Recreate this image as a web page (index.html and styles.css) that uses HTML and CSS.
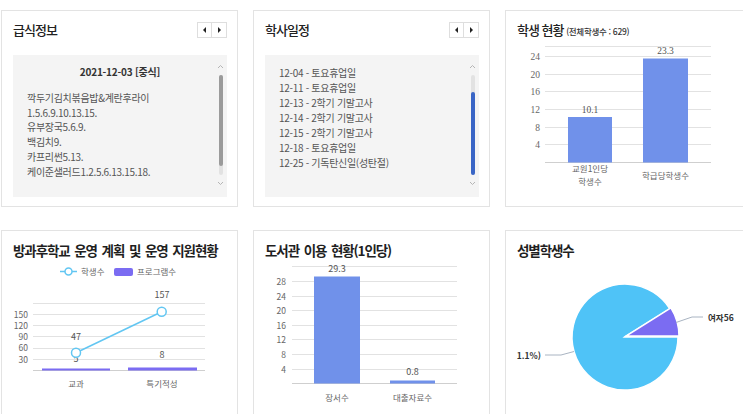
FILE: index.html
```html
<!DOCTYPE html>
<html lang="ko">
<head>
<meta charset="utf-8">
<title>대시보드</title>
<link rel="stylesheet" href="styles.css">
</head>
<body>
<div class="dash">

  <section class="panel">
    <div class="panel-head">
      <h2 class="title">급식정보</h2>
      <div class="pager"><span class="pg prev"></span><span class="pg next"></span></div>
    </div>
    <div class="scrollbox">
      <div class="meal-date">2021-12-03 [중식]</div>
      <ul class="lines meal">
        <li>깍두기김치볶음밥&amp;계란후라이</li>
        <li>1.5.6.9.10.13.15.</li>
        <li>유부장국5.6.9.</li>
        <li>백김치9.</li>
        <li>카프리썬5.13.</li>
        <li>케이준샐러드1.2.5.6.13.15.18.</li>
      </ul>
      <div class="sbar">
        <svg class="chev" width="7" height="5" viewBox="0 0 7 5"><polyline points="1,4 3.5,1.5 6,4" fill="none" stroke="#b5b5b5" stroke-width="1"/></svg>
        <div class="track"><div class="thumb thumb-gray"></div></div>
        <svg class="chev" width="7" height="5" viewBox="0 0 7 5"><polyline points="1,1 3.5,3.5 6,1" fill="none" stroke="#b5b5b5" stroke-width="1"/></svg>
      </div>
    </div>
  </section>

  <section class="panel">
    <div class="panel-head">
      <h2 class="title">학사일정</h2>
      <div class="pager"><span class="pg prev"></span><span class="pg next"></span></div>
    </div>
    <div class="scrollbox">
      <ul class="lines sched">
        <li>12-04 - 토요휴업일</li>
        <li>12-11 - 토요휴업일</li>
        <li>12-13 - 2학기 기말고사</li>
        <li>12-14 - 2학기 기말고사</li>
        <li>12-15 - 2학기 기말고사</li>
        <li>12-18 - 토요휴업일</li>
        <li>12-25 - 기독탄신일(성탄절)</li>
      </ul>
      <div class="sbar">
        <svg class="chev" width="7" height="5" viewBox="0 0 7 5"><polyline points="1,4 3.5,1.5 6,4" fill="none" stroke="#b5b5b5" stroke-width="1"/></svg>
        <div class="track"><div class="thumb thumb-blue"></div></div>
        <svg class="chev" width="7" height="5" viewBox="0 0 7 5"><polyline points="1,1 3.5,3.5 6,1" fill="none" stroke="#b5b5b5" stroke-width="1"/></svg>
      </div>
    </div>
  </section>

  <section class="panel">
    <div class="panel-head">
      <h2 class="title">학생 현황 <small class="sub">(전체학생수 : 629)</small></h2>
    </div>
    <svg class="chart" width="217" height="159" viewBox="517 38 217 159">
      <g stroke="#e2e2e2" stroke-width="1">
        <line x1="545" y1="46.5" x2="711" y2="46.5"/>
        <line x1="545" y1="56.5" x2="711" y2="56.5"/>
        <line x1="545" y1="74.5" x2="711" y2="74.5"/>
        <line x1="545" y1="91.5" x2="711" y2="91.5"/>
        <line x1="545" y1="109.5" x2="711" y2="109.5"/>
        <line x1="545" y1="127.5" x2="711" y2="127.5"/>
        <line x1="545" y1="144.5" x2="711" y2="144.5"/>
      </g>
      <line x1="545" y1="162.5" x2="711" y2="162.5" stroke="#cfcfcf"/>
      <g class="ax serif" text-anchor="end">
        <text x="540" y="59.5">24</text>
        <text x="540" y="77.5">20</text>
        <text x="540" y="94.5">16</text>
        <text x="540" y="112.5">12</text>
        <text x="540" y="130.5">8</text>
        <text x="540" y="147.5">4</text>
      </g>
      <rect x="568" y="117" width="44" height="45.5" fill="#7091ea"/>
      <rect x="643" y="58.5" width="45" height="104" fill="#7091ea"/>
      <g class="val serif" text-anchor="middle">
        <text x="590" y="113">10.1</text>
        <text x="665.5" y="54">23.3</text>
      </g>
      <g class="ax" text-anchor="middle">
        <text x="590" y="172">교원1인당</text>
        <text x="590" y="185">학생수</text>
        <text x="665.5" y="179">학급당학생수</text>
      </g>
    </svg>
  </section>

  <section class="panel">
    <div class="panel-head">
      <h2 class="title title-lg">방과후학교 운영 계획 및 운영 지원현황</h2>
    </div>
    <svg class="chart" width="214" height="155" viewBox="13 258 214 155">
      <line x1="60" y1="271.5" x2="77" y2="271.5" stroke="#62c6f2" stroke-width="1.5"/>
      <circle cx="68.5" cy="271.5" r="3.5" fill="#fff" stroke="#62c6f2" stroke-width="1.5"/>
      <text class="leg" x="81" y="274.5">학생수</text>
      <rect x="114" y="268" width="19" height="8" rx="2" fill="#7b6cf2"/>
      <text class="leg" x="137" y="274.5">프로그램수</text>
      <g stroke="#e2e2e2" stroke-width="1">
        <line x1="33" y1="303.5" x2="205" y2="303.5"/>
        <line x1="33" y1="314.5" x2="205" y2="314.5"/>
        <line x1="33" y1="325.5" x2="205" y2="325.5"/>
        <line x1="33" y1="336.5" x2="205" y2="336.5"/>
        <line x1="33" y1="348.5" x2="205" y2="348.5"/>
        <line x1="33" y1="359.5" x2="205" y2="359.5"/>
      </g>
      <line x1="33" y1="370.5" x2="205" y2="370.5" stroke="#cfcfcf"/>
      <g class="ax" text-anchor="end">
        <text x="28" y="317.5">150</text>
        <text x="28" y="328.5">120</text>
        <text x="28" y="339.5">90</text>
        <text x="28" y="351">60</text>
        <text x="28" y="362.5">30</text>
      </g>
      <rect x="42" y="368.5" width="68" height="2" fill="#7b6cf2"/>
      <rect x="128" y="367.5" width="69" height="3" fill="#7b6cf2"/>
      <g class="val" text-anchor="middle">
        <text x="76" y="340">47</text>
        <text x="162" y="297.5">157</text>
        <text x="76" y="361.5">5</text>
        <text x="162" y="358">8</text>
      </g>
      <line x1="76" y1="352.7" x2="161.7" y2="311.7" stroke="#62c6f2" stroke-width="1.5"/>
      <circle cx="76" cy="352.7" r="4.5" fill="#fff" stroke="#62c6f2" stroke-width="1.5"/>
      <circle cx="161.7" cy="311.7" r="4.5" fill="#fff" stroke="#62c6f2" stroke-width="1.5"/>
      <g class="ax" text-anchor="middle">
        <text x="76" y="387">교과</text>
        <text x="162" y="387">특기적성</text>
      </g>
    </svg>
  </section>

  <section class="panel">
    <div class="panel-head">
      <h2 class="title title-lg">도서관 이용 현황(1인당)</h2>
    </div>
    <svg class="chart" width="214" height="155" viewBox="265 258 214 155">
      <g stroke="#e2e2e2" stroke-width="1">
        <line x1="292" y1="266.5" x2="457" y2="266.5"/>
        <line x1="292" y1="281.5" x2="457" y2="281.5"/>
        <line x1="292" y1="296.5" x2="457" y2="296.5"/>
        <line x1="292" y1="310.5" x2="457" y2="310.5"/>
        <line x1="292" y1="325.5" x2="457" y2="325.5"/>
        <line x1="292" y1="339.5" x2="457" y2="339.5"/>
        <line x1="292" y1="354.5" x2="457" y2="354.5"/>
        <line x1="292" y1="369.5" x2="457" y2="369.5"/>
      </g>
      <line x1="292" y1="383.5" x2="457" y2="383.5" stroke="#cfcfcf"/>
      <g class="ax" text-anchor="end">
        <text x="286" y="284.5">28</text>
        <text x="286" y="299.5">24</text>
        <text x="286" y="313.5">20</text>
        <text x="286" y="328.5">16</text>
        <text x="286" y="342.5">12</text>
        <text x="286" y="357.5">8</text>
        <text x="286" y="372.5">4</text>
      </g>
      <rect x="314" y="276.5" width="46" height="107" fill="#7091ea"/>
      <rect x="390" y="380.5" width="45" height="3" fill="#7091ea"/>
      <g class="val" text-anchor="middle">
        <text x="337" y="272">29.3</text>
        <text x="412.5" y="375">0.8</text>
      </g>
      <g class="ax" text-anchor="middle">
        <text x="337" y="401">장서수</text>
        <text x="412.5" y="401">대출자료수</text>
      </g>
    </svg>
  </section>

  <section class="panel">
    <div class="panel-head">
      <h2 class="title title-lg">성별학생수</h2>
    </div>
    <svg class="chart" width="217" height="155" viewBox="517 258 217 155">
      <path d="M625 337 L669.9 308.9 A53 53 0 1 0 678 337 Z" fill="#4fc3f7" stroke="#fff" stroke-width="1.5"/>
      <path d="M626 336 L679 336 A53 53 0 0 0 670.9 307.9 Z" fill="#7b6cf2" stroke="#fff" stroke-width="1.5"/>
      <polyline points="676,322.5 692,317 703,317" fill="none" stroke="#a9b4c2" stroke-width="1"/>
      <text class="pielabel" x="708" y="320.5">여자56</text>
      <polyline points="574,351.5 561,355 545,355" fill="none" stroke="#a9b4c2" stroke-width="1"/>
      <text class="pielabel" x="541" y="358.5" text-anchor="end">1.1%)</text>
    </svg>
  </section>

</div>
</body>
</html>
```

FILE: styles.css
```css
html, body {
  margin: 0;
  padding: 0;
  background: #ffffff;
  overflow: hidden;
}

body {
  font-family: "Noto Sans CJK KR", "Noto Sans", sans-serif;
  color: #333;
}

.dash {
  display: grid;
  grid-template-columns: 237px 237px 240px;
  grid-template-rows: 197px 197px;
  column-gap: 15px;
  row-gap: 23px;
  padding: 10px 0 0 1px;
}

.panel {
  box-sizing: border-box;
  border: 1px solid #e3e3e3;
  padding: 11px 10px 9px 11px;
  overflow: hidden;
  background: #fff;
}

.panel-head {
  display: flex;
  align-items: center;
  justify-content: space-between;
  height: 16px;
}

.title {
  margin: 0;
  font-size: 13px;
  line-height: 16px;
  font-weight: 500;
  letter-spacing: -1px;
  color: #222;
  white-space: nowrap;
}

.title-lg {
  font-size: 13.5px;
  font-weight: 700;
  letter-spacing: -1.1px;
  word-spacing: 2px;
  color: #1f1f1f;
}

.sub {
  font-size: 8.5px;
  letter-spacing: -0.3px;
  font-weight: 500;
  color: #333;
}

.pager {
  display: flex;
  margin-top: -1px;
}

.pg {
  box-sizing: border-box;
  width: 15px;
  height: 16px;
  border: 1px solid #dedede;
  background: #fff;
  display: flex;
  align-items: center;
  justify-content: center;
}

.pg + .pg {
  border-left: none;
}

.pg::before {
  content: "";
  width: 0;
  height: 0;
  border-top: 3px solid transparent;
  border-bottom: 3px solid transparent;
}

.prev::before {
  border-right: 3px solid #222;
}

.next::before {
  border-left: 3px solid #222;
}

.scrollbox {
  position: relative;
  box-sizing: border-box;
  margin-top: 17px;
  height: 142px;
  background: #f4f4f4;
  padding: 10px 15px 0 14px;
}

.meal-date {
  text-align: center;
  font-size: 10px;
  font-weight: 700;
  line-height: 14px;
  color: #333;
  letter-spacing: -0.2px;
  margin-bottom: 12px;
  padding-left: 1px;
}

.lines {
  list-style: none;
  margin: 0;
  padding: 0;
  font-size: 10px;
  line-height: 14.7px;
  color: #555;
  letter-spacing: -0.3px;
}

.sched {
  line-height: 15px;
}

.sbar {
  position: absolute;
  top: 9px;
  bottom: 11px;
  right: 3px;
  width: 7px;
  display: flex;
  flex-direction: column;
  align-items: center;
  gap: 6px;
}

.chev {
  display: block;
  flex: none;
}

.track {
  flex: 1;
  width: 4px;
  border-radius: 2px;
  background: #e2e2e2;
  position: relative;
  display: flex;
  flex-direction: column;
}

.thumb {
  width: 4px;
  border-radius: 2px;
}

.thumb-gray {
  height: 91px;
  background: #9b9b9b;
}

.thumb-blue {
  margin-top: 17px;
  flex: 1;
  background: #3a66c6;
}

.chart {
  display: block;
  overflow: visible;
}

.chart text {
  font-family: "Noto Sans CJK KR", "Noto Sans", sans-serif;
}

.chart .ax {
  font-size: 8.5px;
  fill: #666;
}

.chart .val {
  font-size: 9px;
  fill: #555;
}

.chart .serif text {
  font-family: "Liberation Serif", "DejaVu Serif", serif;
  font-size: 9.5px;
}

.chart .leg {
  font-size: 8.5px;
  fill: #666;
}

.chart .pielabel {
  font-size: 8.5px;
  font-weight: 700;
  fill: #333;
}
```
